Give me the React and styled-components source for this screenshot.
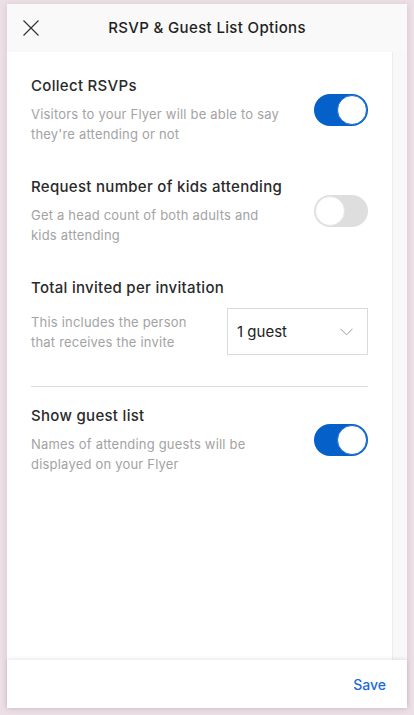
import React from "react";
import styled, { createGlobalStyle } from "styled-components";

const Global = createGlobalStyle`
  html, body { margin: 0; padding: 0; background: #ecdfe5; }
  body { font-family: Inter, "Noto Sans", Arial, sans-serif; -webkit-font-smoothing: antialiased; }
  * { box-sizing: border-box; }
`;

const Page = styled.div`
  width: 414px;
  height: 715px;
  padding: 4px 7px 7px 7px;
  background: #ecdfe5;
`;

const Modal = styled.div`
  width: 400px;
  height: 704px;
  display: flex;
  flex-direction: column;
  background: #fff;
  box-shadow: 0 1px 6px rgba(120, 80, 100, 0.18);
`;

const Header = styled.div`
  height: 48px;
  flex: none;
  display: grid;
  grid-template-columns: 48px 1fr 48px;
  align-items: center;
  background: #f9f9f9;
`;

const CloseButton = styled.button`
  border: 0;
  background: none;
  padding: 0;
  margin-left: 16px;
  width: 16px;
  height: 16px;
  display: flex;
  cursor: pointer;
`;

const Title = styled.h1`
  margin: 0;
  text-align: center;
  font-size: 15px;
  line-height: 20px;
  font-weight: 500;
  color: #1f1f1f;
  letter-spacing: 0.35px;
`;

const Body = styled.div`
  flex: 1;
  display: flex;
  min-height: 0;
`;

const Content = styled.div`
  flex: 1;
  padding: 24px 24px 0 24px;
  display: flex;
  flex-direction: column;
`;

const Gutter = styled.div`
  width: 15px;
  flex: none;
  background: #f8f8f8;
  border-left: 1px solid #ececec;
`;

const Section = styled.div`
  display: flex;
  align-items: center;
  justify-content: space-between;
  margin-bottom: ${(p) => p.$mb ?? 33}px;
`;

const TextCol = styled.div`
  width: ${(p) => p.$w}px;
  flex: none;
  display: flex;
  flex-direction: column;
  gap: 8px;
`;

const Label = styled.div`
  font-size: 15px;
  line-height: 20px;
  font-weight: 500;
  color: #2a2a2a;
  letter-spacing: 0.3px;
  white-space: nowrap;
`;

const Desc = styled.div`
  font-size: 13px;
  line-height: 20px;
  color: #a3a3a3;
  letter-spacing: 0.2px;
`;

const Track = styled.div`
  width: 54px;
  height: 32px;
  flex: none;
  border-radius: 16px;
  padding: 1px;
  display: flex;
  justify-content: ${(p) => (p.$on ? "flex-end" : "flex-start")};
  background: ${(p) => (p.$on ? "#0660c9" : "#dedede")};
`;

const Knob = styled.div`
  width: 30px;
  height: 30px;
  border-radius: 50%;
  background: #fff;
  border: 1px solid ${(p) => (p.$on ? "#1a6fd6" : "#e6e6e6")};
`;

const Toggle = ({ on }) => (
  <Track $on={on}>
    <Knob $on={on} />
  </Track>
);

const Stack = styled.div`
  display: flex;
  flex-direction: column;
  gap: 10px;
  margin-bottom: 31px;
`;

const SelectRow = styled.div`
  display: flex;
  align-items: center;
  justify-content: space-between;
`;

const Select = styled.div`
  width: 141px;
  height: 47px;
  border: 1px solid #dadada;
  display: flex;
  align-items: center;
  justify-content: space-between;
  padding: 0 14px 0 9px;
  font-size: 15px;
  color: #222;
`;

const Divider = styled.hr`
  margin: 0 0 19px 0;
  border: 0;
  border-top: 1px solid #dcdcdc;
`;

const Footer = styled.div`
  height: 48px;
  flex: none;
  display: flex;
  align-items: center;
  justify-content: flex-end;
  padding-right: 21px;
  background: #fff;
  box-shadow: 0 -1px 4px rgba(0, 0, 0, 0.1);
  position: relative;
`;

const SaveButton = styled.button`
  border: 0;
  background: none;
  padding: 0;
  font-family: inherit;
  font-size: 14px;
  font-weight: 500;
  color: #1a6ad6;
  cursor: pointer;
`;

export default function App() {
  return (
    <Page>
      <Global />
      <Modal>
        <Header>
          <CloseButton aria-label="Close">
            <svg width="16" height="16" viewBox="0 0 16 16">
              <path d="M0.5 0.5 L15.5 15.5 M15.5 0.5 L0.5 15.5" stroke="#333" strokeWidth="1.2" fill="none" />
            </svg>
          </CloseButton>
          <Title>RSVP &amp; Guest List Options</Title>
          <span />
        </Header>
        <Body>
          <Content>
            <Section>
              <TextCol $w={252}>
                <Label>Collect RSVPs</Label>
                <Desc>Visitors to your Flyer will be able to say they're attending or not</Desc>
              </TextCol>
              <Toggle on />
            </Section>
            <Section>
              <TextCol $w={252}>
                <Label>Request number of kids attending</Label>
                <Desc>Get a head count of both adults and kids attending</Desc>
              </TextCol>
              <Toggle on={false} />
            </Section>
            <Stack>
              <Label>Total invited per invitation</Label>
              <SelectRow>
                <TextCol $w={172}>
                  <Desc>This includes the person that receives the invite</Desc>
                </TextCol>
                <Select>
                  <span>1 guest</span>
                  <svg width="13" height="8" viewBox="0 0 13 8">
                    <path d="M0.5 0.8 L6.5 6.8 L12.5 0.8" stroke="#9a9a9a" strokeWidth="1" fill="none" />
                  </svg>
                </Select>
              </SelectRow>
            </Stack>
            <Divider />
            <Section>
              <TextCol $w={252}>
                <Label>Show guest list</Label>
                <Desc>Names of attending guests will be displayed on your Flyer</Desc>
              </TextCol>
              <Toggle on />
            </Section>
          </Content>
          <Gutter />
        </Body>
        <Footer>
          <SaveButton>Save</SaveButton>
        </Footer>
      </Modal>
    </Page>
  );
}
